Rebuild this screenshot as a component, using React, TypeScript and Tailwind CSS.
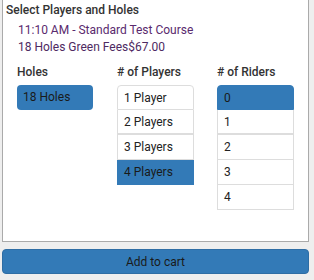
import React, { useState } from 'react';

const players = ['1 Player', '2 Players', '3 Players', '4 Players'];
const riders = ['0', '1', '2', '3', '4'];

function rowClass(i: number, selected: boolean) {
  let c = 'h-[25px] text-left pl-[6px] border-x ';
  c += i === 1 ? 'border-b-2 ' : 'border-b ';
  if (i === 0) c += 'border-t rounded-t-[4px] ';
  c += selected ? 'bg-[#337ab7] border-[#337ab7] text-[#1a1a1a]' : 'bg-white border-[#dddddd] text-[#222]';
  return c;
}

function App() {
  const [holes] = useState('18 Holes');
  const [playerCount, setPlayerCount] = useState(3);
  const [riderCount, setRiderCount] = useState(0);

  return (
    <div className="w-[314px] h-[280px] bg-[#eeeeee] overflow-hidden text-[12px] text-[#222]" style={{ fontFamily: 'Roboto, "Liberation Sans", sans-serif' }}>
      <div className="ml-[2px] w-[307px] h-[242px] bg-white border border-t-0 border-[#aaaaaa]">
        <div className="pl-[3px] pt-[2px] leading-[16px] font-medium text-[#333]">Select Players and Holes</div>
        <div className="pl-[15px] mt-[4px] leading-[16px] text-[#5a2a6e]">11:10 AM - Standard Test Course</div>
        <div className="pl-[15px] mt-[1px] leading-[16px] text-[#4e2a62]">18 Holes Green Fees$67.00</div>

        <div className="flex pl-[14px] mt-[9px]">
          <div className="w-[100px] shrink-0">
            <div className="leading-[16px] font-medium text-[#333]">Holes</div>
            <div className="mt-[5px] w-[76px] h-[25px] bg-[#337ab7] rounded-[4px] pl-[6px] leading-[25px] text-[#1a1a1a]">{holes}</div>
          </div>
          <div className="w-[100px] shrink-0">
            <div className="leading-[16px] font-medium text-[#333]"># of Players</div>
            <div className="mt-[5px] w-[77px] flex flex-col">
              {players.map((p, i) => (
                <button key={p} onClick={() => setPlayerCount(i)} className={rowClass(i, i === playerCount)}>
                  {p}
                </button>
              ))}
            </div>
          </div>
          <div className="w-[90px] shrink-0">
            <div className="leading-[16px] font-medium text-[#333]"># of Riders</div>
            <div className="mt-[5px] w-[77px] flex flex-col">
              {riders.map((r, i) => (
                <button key={r} onClick={() => setRiderCount(i)} className={rowClass(i, i === riderCount)}>
                  {r}
                </button>
              ))}
            </div>
          </div>
        </div>
      </div>

      <button className="block ml-[2px] mt-[7px] w-[307px] h-[25px] bg-[#337ab7] border border-[#2e6da4] rounded-[4px] text-center text-[#1a1a1a]">
        Add to cart
      </button>
    </div>
  );
}

export default App;
